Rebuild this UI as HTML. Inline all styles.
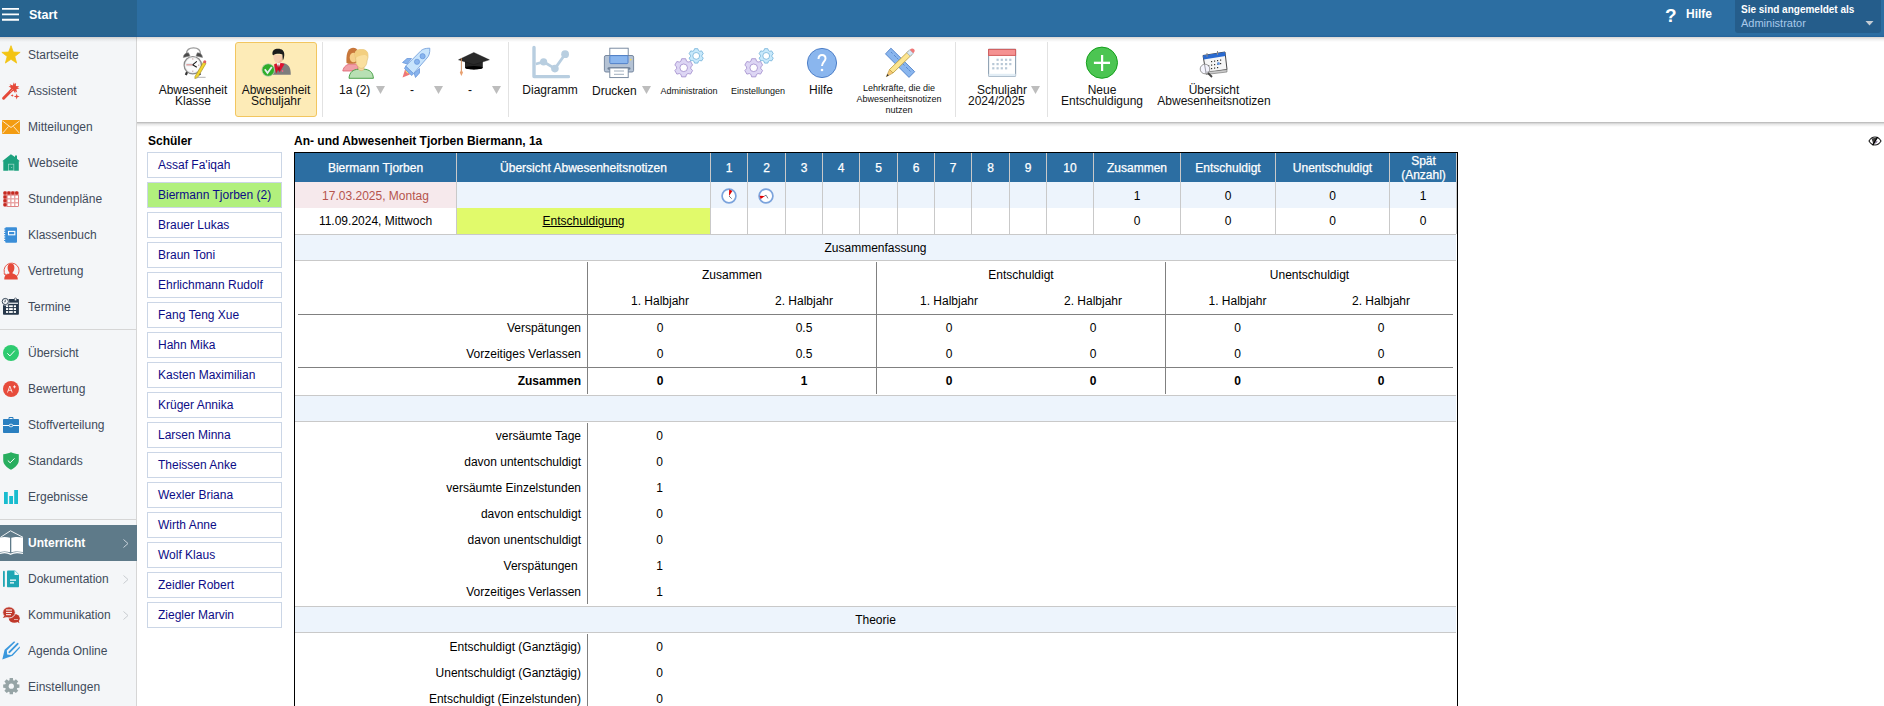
<!DOCTYPE html><html><head><meta charset="utf-8"><style>
html,body{margin:0;padding:0;width:1884px;height:706px;overflow:hidden;background:#fff;font-family:"Liberation Sans",sans-serif;font-size:12px;color:#000;}
div{box-sizing:border-box;}
svg{position:absolute;display:block;}
</style></head><body>
<div style="position:absolute;left:0px;top:0px;width:1884px;height:37px;background:#2c6ea2;"></div>
<div style="position:absolute;left:0px;top:0px;width:137px;height:37px;background:#28648f;"></div>
<div style="position:absolute;left:0px;top:35px;width:1884px;height:2px;background:linear-gradient(rgba(30,90,150,0),rgba(30,90,150,0.6));"></div>
<svg style="left:2px;top:7px" width="18" height="14"><path d="M0 1.95H17M0 7.35H17M0 12.75H17" stroke="#fff" stroke-width="1.8"/></svg>
<div style="position:absolute;left:29px;top:1px;width:60px;height:29px;line-height:29px;text-align:left;white-space:nowrap;color:#fff;font-weight:bold;font-size:12.5px;">Start</div>
<div style="position:absolute;left:1665px;top:1px;width:14px;height:29px;line-height:29px;text-align:left;white-space:nowrap;color:#fff;font-weight:bold;font-size:19px;">?</div>
<div style="position:absolute;left:1686px;top:0px;width:40px;height:29px;line-height:29px;text-align:left;white-space:nowrap;color:#fff;font-weight:bold;font-size:12px;">Hilfe</div>
<div style="position:absolute;left:1735px;top:0px;width:146px;height:33px;background:#255d8b;border-radius:0 0 3px 3px;"></div>
<div style="position:absolute;left:1741px;top:2.5px;width:140px;height:14px;line-height:14px;text-align:left;white-space:nowrap;color:#fff;font-weight:bold;font-size:10px;">Sie sind angemeldet als</div>
<div style="position:absolute;left:1741px;top:16px;width:140px;height:14px;line-height:14px;text-align:left;white-space:nowrap;color:#a9c9ea;font-size:11px;">Administrator</div>
<svg style="left:1865px;top:21px" width="9" height="5"><path d="M0.5 0H8.5L4.5 4.5Z" fill="#c4ccd4"/></svg>
<div style="position:absolute;left:0px;top:37px;width:136px;height:669px;background:#f4f6f8;"></div>
<div style="position:absolute;left:136px;top:37px;width:1px;height:669px;background:#d6d6d6;"></div>
<div style="position:absolute;left:0px;top:329px;width:136px;height:1px;background:#d6d6d6;"></div>
<div style="position:absolute;left:0px;top:519px;width:136px;height:1px;background:#d6d6d6;"></div>
<div style="position:absolute;left:0px;top:525px;width:137px;height:36px;background:#5e7a89;"></div>
<div style="position:absolute;left:28px;top:525px;width:100px;height:36px;line-height:36px;text-align:left;white-space:nowrap;color:#fff;font-weight:bold;">Unterricht</div>
<div style="position:absolute;left:28px;top:37px;width:106px;height:36px;line-height:36px;text-align:left;white-space:nowrap;color:#3f4b5b;">Startseite</div>
<div style="position:absolute;left:28px;top:73px;width:106px;height:36px;line-height:36px;text-align:left;white-space:nowrap;color:#3f4b5b;">Assistent</div>
<div style="position:absolute;left:28px;top:109px;width:106px;height:36px;line-height:36px;text-align:left;white-space:nowrap;color:#3f4b5b;">Mitteilungen</div>
<div style="position:absolute;left:28px;top:145px;width:106px;height:36px;line-height:36px;text-align:left;white-space:nowrap;color:#3f4b5b;">Webseite</div>
<div style="position:absolute;left:28px;top:181px;width:106px;height:36px;line-height:36px;text-align:left;white-space:nowrap;color:#3f4b5b;">Stundenpläne</div>
<div style="position:absolute;left:28px;top:217px;width:106px;height:36px;line-height:36px;text-align:left;white-space:nowrap;color:#3f4b5b;">Klassenbuch</div>
<div style="position:absolute;left:28px;top:253px;width:106px;height:36px;line-height:36px;text-align:left;white-space:nowrap;color:#3f4b5b;">Vertretung</div>
<div style="position:absolute;left:28px;top:289px;width:106px;height:36px;line-height:36px;text-align:left;white-space:nowrap;color:#3f4b5b;">Termine</div>
<div style="position:absolute;left:28px;top:335px;width:106px;height:36px;line-height:36px;text-align:left;white-space:nowrap;color:#3f4b5b;">Übersicht</div>
<div style="position:absolute;left:28px;top:371px;width:106px;height:36px;line-height:36px;text-align:left;white-space:nowrap;color:#3f4b5b;">Bewertung</div>
<div style="position:absolute;left:28px;top:407px;width:106px;height:36px;line-height:36px;text-align:left;white-space:nowrap;color:#3f4b5b;">Stoffverteilung</div>
<div style="position:absolute;left:28px;top:443px;width:106px;height:36px;line-height:36px;text-align:left;white-space:nowrap;color:#3f4b5b;">Standards</div>
<div style="position:absolute;left:28px;top:479px;width:106px;height:36px;line-height:36px;text-align:left;white-space:nowrap;color:#3f4b5b;">Ergebnisse</div>
<div style="position:absolute;left:28px;top:561px;width:106px;height:36px;line-height:36px;text-align:left;white-space:nowrap;color:#3f4b5b;">Dokumentation</div>
<div style="position:absolute;left:28px;top:597px;width:106px;height:36px;line-height:36px;text-align:left;white-space:nowrap;color:#3f4b5b;">Kommunikation</div>
<div style="position:absolute;left:28px;top:633px;width:106px;height:36px;line-height:36px;text-align:left;white-space:nowrap;color:#3f4b5b;">Agenda Online</div>
<div style="position:absolute;left:28px;top:669px;width:106px;height:36px;line-height:36px;text-align:left;white-space:nowrap;color:#3f4b5b;">Einstellungen</div>
<svg style="left:123px;top:539px" width="6" height="9"><path d="M0.5 0.5L5 4.5L0.5 8.5" fill="none" stroke="#c9d3da" stroke-width="1"/></svg>
<svg style="left:123px;top:575px" width="6" height="9"><path d="M0.5 0.5L5 4.5L0.5 8.5" fill="none" stroke="#c8ccd0" stroke-width="1"/></svg>
<svg style="left:123px;top:611px" width="6" height="9"><path d="M0.5 0.5L5 4.5L0.5 8.5" fill="none" stroke="#c8ccd0" stroke-width="1"/></svg>
<div style="position:absolute;left:137px;top:37px;width:1747px;height:85px;background:#fff;"></div>
<div style="position:absolute;left:137px;top:122px;width:1747px;height:5px;background:linear-gradient(rgba(0,0,0,0.30),rgba(0,0,0,0.10) 40%,rgba(0,0,0,0));"></div>
<div style="position:absolute;left:0px;top:37px;width:1884px;height:5px;background:linear-gradient(rgba(70,50,30,0.20),rgba(0,0,0,0.06) 50%,rgba(0,0,0,0));"></div>
<div style="position:absolute;left:235px;top:42px;width:82px;height:75px;background:#fdebb7;border:1px solid #f2c660;border-radius:3px;"></div>
<div style="position:absolute;left:322px;top:42px;width:1px;height:75px;background:#e2e2e2;"></div>
<div style="position:absolute;left:508px;top:42px;width:1px;height:75px;background:#e2e2e2;"></div>
<div style="position:absolute;left:955px;top:42px;width:1px;height:75px;background:#e2e2e2;"></div>
<div style="position:absolute;left:1047px;top:42px;width:1px;height:75px;background:#e2e2e2;"></div>
<div style="position:absolute;left:113px;top:85px;width:160px;height:11px;line-height:11px;text-align:center;white-space:nowrap;font-size:12px;color:#111;">Abwesenheit</div>
<div style="position:absolute;left:113px;top:96px;width:160px;height:11px;line-height:11px;text-align:center;white-space:nowrap;font-size:12px;color:#111;">Klasse</div>
<div style="position:absolute;left:196px;top:85px;width:160px;height:11px;line-height:11px;text-align:center;white-space:nowrap;font-size:12px;color:#111;">Abwesenheit</div>
<div style="position:absolute;left:196px;top:96px;width:160px;height:11px;line-height:11px;text-align:center;white-space:nowrap;font-size:12px;color:#111;">Schuljahr</div>
<div style="position:absolute;left:339px;top:84px;width:40px;height:12px;line-height:12px;text-align:left;white-space:nowrap;color:#111;">1a (2)</div>
<div style="position:absolute;left:410px;top:84px;width:10px;height:12px;line-height:12px;text-align:left;white-space:nowrap;color:#111;">-</div>
<div style="position:absolute;left:468px;top:84px;width:10px;height:12px;line-height:12px;text-align:left;white-space:nowrap;color:#111;">-</div>
<div style="position:absolute;left:470px;top:85px;width:160px;height:11px;line-height:11px;text-align:center;white-space:nowrap;font-size:12px;color:#111;">Diagramm</div>
<div style="position:absolute;left:592px;top:85px;width:50px;height:12px;line-height:12px;text-align:left;white-space:nowrap;color:#111;">Drucken</div>
<div style="position:absolute;left:609px;top:86px;width:160px;height:11px;line-height:11px;text-align:center;white-space:nowrap;font-size:9px;color:#111;">Administration</div>
<div style="position:absolute;left:678px;top:86px;width:160px;height:11px;line-height:11px;text-align:center;white-space:nowrap;font-size:9px;color:#111;">Einstellungen</div>
<div style="position:absolute;left:741px;top:85px;width:160px;height:11px;line-height:11px;text-align:center;white-space:nowrap;font-size:12px;color:#111;">Hilfe</div>
<div style="position:absolute;left:819px;top:83px;width:160px;height:11px;line-height:11px;text-align:center;white-space:nowrap;font-size:9px;color:#111;">Lehrkräfte, die die</div>
<div style="position:absolute;left:819px;top:94px;width:160px;height:11px;line-height:11px;text-align:center;white-space:nowrap;font-size:9px;color:#111;">Abwesenheitsnotizen</div>
<div style="position:absolute;left:819px;top:105px;width:160px;height:11px;line-height:11px;text-align:center;white-space:nowrap;font-size:9px;color:#111;">nutzen</div>
<div style="position:absolute;left:977px;top:84px;width:60px;height:12px;line-height:12px;text-align:left;white-space:nowrap;color:#111;">Schuljahr</div>
<div style="position:absolute;left:968px;top:95px;width:60px;height:12px;line-height:12px;text-align:left;white-space:nowrap;color:#111;">2024/2025</div>
<div style="position:absolute;left:1022px;top:85px;width:160px;height:11px;line-height:11px;text-align:center;white-space:nowrap;font-size:12px;color:#111;">Neue</div>
<div style="position:absolute;left:1022px;top:96px;width:160px;height:11px;line-height:11px;text-align:center;white-space:nowrap;font-size:12px;color:#111;">Entschuldigung</div>
<div style="position:absolute;left:1134px;top:85px;width:160px;height:11px;line-height:11px;text-align:center;white-space:nowrap;font-size:12px;color:#111;">Übersicht</div>
<div style="position:absolute;left:1134px;top:96px;width:160px;height:11px;line-height:11px;text-align:center;white-space:nowrap;font-size:12px;color:#111;">Abwesenheitsnotizen</div>
<svg style="left:376px;top:86px" width="9" height="8"><path d="M0 0H9L4.5 8Z" fill="#bdbdbd"/></svg>
<svg style="left:434px;top:86px" width="9" height="8"><path d="M0 0H9L4.5 8Z" fill="#bdbdbd"/></svg>
<svg style="left:492px;top:86px" width="9" height="8"><path d="M0 0H9L4.5 8Z" fill="#bdbdbd"/></svg>
<svg style="left:642px;top:86px" width="9" height="8"><path d="M0 0H9L4.5 8Z" fill="#bdbdbd"/></svg>
<svg style="left:1031px;top:86px" width="9" height="8"><path d="M0 0H9L4.5 8Z" fill="#bdbdbd"/></svg>
<div style="position:absolute;left:148px;top:134px;width:80px;height:14px;line-height:14px;text-align:left;white-space:nowrap;font-weight:bold;color:#000;">Schüler</div>
<div style="position:absolute;left:147px;top:152px;width:135px;height:26px;background:#fff;border:1px solid #cbd6e6;"></div>
<div style="position:absolute;left:158px;top:152px;width:124px;height:26px;line-height:26px;text-align:left;white-space:nowrap;color:#0c0c86;">Assaf Fa&#39;iqah</div>
<div style="position:absolute;left:147px;top:182px;width:135px;height:26px;background:#b1f07d;border:1px solid #cbd6e6;"></div>
<div style="position:absolute;left:158px;top:182px;width:124px;height:26px;line-height:26px;text-align:left;white-space:nowrap;color:#0c0c86;">Biermann Tjorben (2)</div>
<div style="position:absolute;left:147px;top:212px;width:135px;height:26px;background:#fff;border:1px solid #cbd6e6;"></div>
<div style="position:absolute;left:158px;top:212px;width:124px;height:26px;line-height:26px;text-align:left;white-space:nowrap;color:#0c0c86;">Brauer Lukas</div>
<div style="position:absolute;left:147px;top:242px;width:135px;height:26px;background:#fff;border:1px solid #cbd6e6;"></div>
<div style="position:absolute;left:158px;top:242px;width:124px;height:26px;line-height:26px;text-align:left;white-space:nowrap;color:#0c0c86;">Braun Toni</div>
<div style="position:absolute;left:147px;top:272px;width:135px;height:26px;background:#fff;border:1px solid #cbd6e6;"></div>
<div style="position:absolute;left:158px;top:272px;width:124px;height:26px;line-height:26px;text-align:left;white-space:nowrap;color:#0c0c86;">Ehrlichmann Rudolf</div>
<div style="position:absolute;left:147px;top:302px;width:135px;height:26px;background:#fff;border:1px solid #cbd6e6;"></div>
<div style="position:absolute;left:158px;top:302px;width:124px;height:26px;line-height:26px;text-align:left;white-space:nowrap;color:#0c0c86;">Fang Teng Xue</div>
<div style="position:absolute;left:147px;top:332px;width:135px;height:26px;background:#fff;border:1px solid #cbd6e6;"></div>
<div style="position:absolute;left:158px;top:332px;width:124px;height:26px;line-height:26px;text-align:left;white-space:nowrap;color:#0c0c86;">Hahn Mika</div>
<div style="position:absolute;left:147px;top:362px;width:135px;height:26px;background:#fff;border:1px solid #cbd6e6;"></div>
<div style="position:absolute;left:158px;top:362px;width:124px;height:26px;line-height:26px;text-align:left;white-space:nowrap;color:#0c0c86;">Kasten Maximilian</div>
<div style="position:absolute;left:147px;top:392px;width:135px;height:26px;background:#fff;border:1px solid #cbd6e6;"></div>
<div style="position:absolute;left:158px;top:392px;width:124px;height:26px;line-height:26px;text-align:left;white-space:nowrap;color:#0c0c86;">Krüger Annika</div>
<div style="position:absolute;left:147px;top:422px;width:135px;height:26px;background:#fff;border:1px solid #cbd6e6;"></div>
<div style="position:absolute;left:158px;top:422px;width:124px;height:26px;line-height:26px;text-align:left;white-space:nowrap;color:#0c0c86;">Larsen Minna</div>
<div style="position:absolute;left:147px;top:452px;width:135px;height:26px;background:#fff;border:1px solid #cbd6e6;"></div>
<div style="position:absolute;left:158px;top:452px;width:124px;height:26px;line-height:26px;text-align:left;white-space:nowrap;color:#0c0c86;">Theissen Anke</div>
<div style="position:absolute;left:147px;top:482px;width:135px;height:26px;background:#fff;border:1px solid #cbd6e6;"></div>
<div style="position:absolute;left:158px;top:482px;width:124px;height:26px;line-height:26px;text-align:left;white-space:nowrap;color:#0c0c86;">Wexler Briana</div>
<div style="position:absolute;left:147px;top:512px;width:135px;height:26px;background:#fff;border:1px solid #cbd6e6;"></div>
<div style="position:absolute;left:158px;top:512px;width:124px;height:26px;line-height:26px;text-align:left;white-space:nowrap;color:#0c0c86;">Wirth Anne</div>
<div style="position:absolute;left:147px;top:542px;width:135px;height:26px;background:#fff;border:1px solid #cbd6e6;"></div>
<div style="position:absolute;left:158px;top:542px;width:124px;height:26px;line-height:26px;text-align:left;white-space:nowrap;color:#0c0c86;">Wolf Klaus</div>
<div style="position:absolute;left:147px;top:572px;width:135px;height:26px;background:#fff;border:1px solid #cbd6e6;"></div>
<div style="position:absolute;left:158px;top:572px;width:124px;height:26px;line-height:26px;text-align:left;white-space:nowrap;color:#0c0c86;">Zeidler Robert</div>
<div style="position:absolute;left:147px;top:602px;width:135px;height:26px;background:#fff;border:1px solid #cbd6e6;"></div>
<div style="position:absolute;left:158px;top:602px;width:124px;height:26px;line-height:26px;text-align:left;white-space:nowrap;color:#0c0c86;">Ziegler Marvin</div>
<div style="position:absolute;left:294px;top:134px;width:300px;height:14px;line-height:14px;text-align:left;white-space:nowrap;font-weight:bold;color:#000;">An- und Abwesenheit Tjorben Biermann, 1a</div>
<svg style="left:1868px;top:136px" width="14" height="10" viewBox="0 0 14 10"><path d="M1 5C2.5 2.3 4.8 1 7 1C9.2 1 11.5 2.3 13 5C11.5 7.7 9.2 9 7 9C4.8 9 2.5 7.7 1 5Z" fill="none" stroke="#1a1a1a" stroke-width="1.1"/><path d="M3.5 2.5L9.2 1.4L5.5 8.5Z" fill="#1a1a1a" opacity="0.85"/><path d="M9.6 1L4.6 9.4" stroke="#000" stroke-width="1.4"/><path d="M8.8 5A1.5 1.5 0 0 1 7 6.8" stroke="#402060" stroke-width="0.8" fill="none"/></svg>
<div style="position:absolute;left:294px;top:152px;width:1164px;height:559px;border:1px solid #000;border-bottom:none;"></div>
<div style="position:absolute;left:295px;top:153px;width:1162px;height:29px;background:#2c6ea2;"></div>
<div style="position:absolute;left:295px;top:182px;width:1162px;height:26px;background:#edf4fc;"></div>
<div style="position:absolute;left:295px;top:182px;width:161px;height:26px;background:#f6e9ec;"></div>
<div style="position:absolute;left:457px;top:208px;width:253px;height:26px;background:#e1fa6b;"></div>
<div style="position:absolute;left:456px;top:153px;width:1px;height:81px;background:#c9c9c9;"></div>
<div style="position:absolute;left:710px;top:153px;width:1px;height:81px;background:#c9c9c9;"></div>
<div style="position:absolute;left:747px;top:153px;width:1px;height:81px;background:#c9c9c9;"></div>
<div style="position:absolute;left:785px;top:153px;width:1px;height:81px;background:#c9c9c9;"></div>
<div style="position:absolute;left:822px;top:153px;width:1px;height:81px;background:#c9c9c9;"></div>
<div style="position:absolute;left:859px;top:153px;width:1px;height:81px;background:#c9c9c9;"></div>
<div style="position:absolute;left:897px;top:153px;width:1px;height:81px;background:#c9c9c9;"></div>
<div style="position:absolute;left:934px;top:153px;width:1px;height:81px;background:#c9c9c9;"></div>
<div style="position:absolute;left:971px;top:153px;width:1px;height:81px;background:#c9c9c9;"></div>
<div style="position:absolute;left:1009px;top:153px;width:1px;height:81px;background:#c9c9c9;"></div>
<div style="position:absolute;left:1046px;top:153px;width:1px;height:81px;background:#c9c9c9;"></div>
<div style="position:absolute;left:1093px;top:153px;width:1px;height:81px;background:#c9c9c9;"></div>
<div style="position:absolute;left:1180px;top:153px;width:1px;height:81px;background:#c9c9c9;"></div>
<div style="position:absolute;left:1275px;top:153px;width:1px;height:81px;background:#c9c9c9;"></div>
<div style="position:absolute;left:1389px;top:153px;width:1px;height:81px;background:#c9c9c9;"></div>
<div style="position:absolute;left:1456px;top:153px;width:1px;height:81px;background:#c9c9c9;"></div>
<div style="position:absolute;left:295px;top:234px;width:1161px;height:1px;background:#c9c9c9;"></div>
<div style="position:absolute;left:295px;top:154px;width:161px;height:29px;line-height:29px;text-align:center;white-space:nowrap;color:#fff;-webkit-text-stroke:0.25px #fff;">Biermann Tjorben</div>
<div style="position:absolute;left:457px;top:154px;width:253px;height:29px;line-height:29px;text-align:center;white-space:nowrap;color:#fff;-webkit-text-stroke:0.25px #fff;">Übersicht Abwesenheitsnotizen</div>
<div style="position:absolute;left:711px;top:154px;width:36px;height:29px;line-height:29px;text-align:center;white-space:nowrap;color:#fff;-webkit-text-stroke:0.25px #fff;">1</div>
<div style="position:absolute;left:748px;top:154px;width:37px;height:29px;line-height:29px;text-align:center;white-space:nowrap;color:#fff;-webkit-text-stroke:0.25px #fff;">2</div>
<div style="position:absolute;left:786px;top:154px;width:36px;height:29px;line-height:29px;text-align:center;white-space:nowrap;color:#fff;-webkit-text-stroke:0.25px #fff;">3</div>
<div style="position:absolute;left:823px;top:154px;width:36px;height:29px;line-height:29px;text-align:center;white-space:nowrap;color:#fff;-webkit-text-stroke:0.25px #fff;">4</div>
<div style="position:absolute;left:860px;top:154px;width:37px;height:29px;line-height:29px;text-align:center;white-space:nowrap;color:#fff;-webkit-text-stroke:0.25px #fff;">5</div>
<div style="position:absolute;left:898px;top:154px;width:36px;height:29px;line-height:29px;text-align:center;white-space:nowrap;color:#fff;-webkit-text-stroke:0.25px #fff;">6</div>
<div style="position:absolute;left:935px;top:154px;width:36px;height:29px;line-height:29px;text-align:center;white-space:nowrap;color:#fff;-webkit-text-stroke:0.25px #fff;">7</div>
<div style="position:absolute;left:972px;top:154px;width:37px;height:29px;line-height:29px;text-align:center;white-space:nowrap;color:#fff;-webkit-text-stroke:0.25px #fff;">8</div>
<div style="position:absolute;left:1010px;top:154px;width:36px;height:29px;line-height:29px;text-align:center;white-space:nowrap;color:#fff;-webkit-text-stroke:0.25px #fff;">9</div>
<div style="position:absolute;left:1047px;top:154px;width:46px;height:29px;line-height:29px;text-align:center;white-space:nowrap;color:#fff;-webkit-text-stroke:0.25px #fff;">10</div>
<div style="position:absolute;left:1094px;top:154px;width:86px;height:29px;line-height:29px;text-align:center;white-space:nowrap;color:#fff;-webkit-text-stroke:0.25px #fff;">Zusammen</div>
<div style="position:absolute;left:1181px;top:154px;width:94px;height:29px;line-height:29px;text-align:center;white-space:nowrap;color:#fff;-webkit-text-stroke:0.25px #fff;">Entschuldigt</div>
<div style="position:absolute;left:1276px;top:154px;width:113px;height:29px;line-height:29px;text-align:center;white-space:nowrap;color:#fff;-webkit-text-stroke:0.25px #fff;">Unentschuldigt</div>
<div style="position:absolute;left:1390px;top:153px;width:67px;height:29px;text-align:center;color:#fff;-webkit-text-stroke:0.25px #fff;line-height:14px;padding-top:1px;">Spät<br>(Anzahl)</div>
<div style="position:absolute;left:295px;top:183px;width:161px;height:26px;line-height:26px;text-align:center;white-space:nowrap;color:#b5544c;">17.03.2025, Montag</div>
<div style="position:absolute;left:295px;top:208px;width:161px;height:26px;line-height:26px;text-align:center;white-space:nowrap;color:#000;">11.09.2024, Mittwoch</div>
<div style="position:absolute;left:457px;top:208px;width:253px;height:26px;line-height:26px;text-align:center;white-space:nowrap;color:#000;"><span style="text-decoration:underline">Entschuldigung</span></div>
<div style="position:absolute;left:1094px;top:183px;width:86px;height:26px;line-height:26px;text-align:center;white-space:nowrap;">1</div>
<div style="position:absolute;left:1181px;top:183px;width:94px;height:26px;line-height:26px;text-align:center;white-space:nowrap;">0</div>
<div style="position:absolute;left:1276px;top:183px;width:113px;height:26px;line-height:26px;text-align:center;white-space:nowrap;">0</div>
<div style="position:absolute;left:1390px;top:183px;width:66px;height:26px;line-height:26px;text-align:center;white-space:nowrap;">1</div>
<div style="position:absolute;left:1094px;top:208px;width:86px;height:26px;line-height:26px;text-align:center;white-space:nowrap;">0</div>
<div style="position:absolute;left:1181px;top:208px;width:94px;height:26px;line-height:26px;text-align:center;white-space:nowrap;">0</div>
<div style="position:absolute;left:1276px;top:208px;width:113px;height:26px;line-height:26px;text-align:center;white-space:nowrap;">0</div>
<div style="position:absolute;left:1390px;top:208px;width:66px;height:26px;line-height:26px;text-align:center;white-space:nowrap;">0</div>
<svg style="left:721px;top:188px" width="16" height="16" viewBox="0 0 16 16"><circle cx="8" cy="8" r="6.9" fill="#fff" stroke="#7ba3dc" stroke-width="1.7"/><path d="M8 8L8.2 1.6L11.4 3Z" fill="#e00000"/><path d="M8 8L10.7 10.7" stroke="#4a5a6a" stroke-width="0.8" fill="none"/></svg>
<svg style="left:758px;top:188px" width="16" height="16" viewBox="0 0 16 16"><circle cx="8" cy="8" r="6.9" fill="#fff" stroke="#7ba3dc" stroke-width="1.7"/><path d="M7 8L1.6 7.8L2.6 10.9Z" fill="#e00000"/><path d="M6.5 7.7L8.2 7.3L9.9 10.4" stroke="#4a5a6a" stroke-width="0.8" fill="none"/></svg>
<div style="position:absolute;left:295px;top:235px;width:1161px;height:25px;background:#edf4fc;"></div>
<div style="position:absolute;left:295px;top:260px;width:1161px;height:1px;background:#c9c9c9;"></div>
<div style="position:absolute;left:295px;top:236px;width:1161px;height:25px;line-height:25px;text-align:center;white-space:nowrap;color:#000;">Zusammenfassung</div>
<div style="position:absolute;left:587px;top:262px;width:1px;height:132px;background:#808080;"></div>
<div style="position:absolute;left:876px;top:262px;width:1px;height:132px;background:#808080;"></div>
<div style="position:absolute;left:1165px;top:262px;width:1px;height:132px;background:#808080;"></div>
<div style="position:absolute;left:298px;top:314px;width:1155px;height:1px;background:#808080;"></div>
<div style="position:absolute;left:298px;top:367px;width:1155px;height:1px;background:#808080;"></div>
<div style="position:absolute;left:588px;top:263px;width:288px;height:25px;line-height:25px;text-align:center;white-space:nowrap;">Zusammen</div>
<div style="position:absolute;left:588px;top:288px;width:144px;height:26px;line-height:26px;text-align:center;white-space:nowrap;">1. Halbjahr</div>
<div style="position:absolute;left:732px;top:288px;width:144px;height:26px;line-height:26px;text-align:center;white-space:nowrap;">2. Halbjahr</div>
<div style="position:absolute;left:877px;top:263px;width:288px;height:25px;line-height:25px;text-align:center;white-space:nowrap;">Entschuldigt</div>
<div style="position:absolute;left:877px;top:288px;width:144px;height:26px;line-height:26px;text-align:center;white-space:nowrap;">1. Halbjahr</div>
<div style="position:absolute;left:1021px;top:288px;width:144px;height:26px;line-height:26px;text-align:center;white-space:nowrap;">2. Halbjahr</div>
<div style="position:absolute;left:1166px;top:263px;width:287px;height:25px;line-height:25px;text-align:center;white-space:nowrap;">Unentschuldigt</div>
<div style="position:absolute;left:1166px;top:288px;width:143px;height:26px;line-height:26px;text-align:center;white-space:nowrap;">1. Halbjahr</div>
<div style="position:absolute;left:1309px;top:288px;width:144px;height:26px;line-height:26px;text-align:center;white-space:nowrap;">2. Halbjahr</div>
<div style="position:absolute;left:298px;top:315px;width:283px;height:26px;line-height:26px;text-align:right;white-space:nowrap;">Verspätungen</div>
<div style="position:absolute;left:588px;top:315px;width:144px;height:26px;line-height:26px;text-align:center;white-space:nowrap;">0</div>
<div style="position:absolute;left:732px;top:315px;width:144px;height:26px;line-height:26px;text-align:center;white-space:nowrap;">0.5</div>
<div style="position:absolute;left:877px;top:315px;width:144px;height:26px;line-height:26px;text-align:center;white-space:nowrap;">0</div>
<div style="position:absolute;left:1021px;top:315px;width:144px;height:26px;line-height:26px;text-align:center;white-space:nowrap;">0</div>
<div style="position:absolute;left:1166px;top:315px;width:143px;height:26px;line-height:26px;text-align:center;white-space:nowrap;">0</div>
<div style="position:absolute;left:1309px;top:315px;width:144px;height:26px;line-height:26px;text-align:center;white-space:nowrap;">0</div>
<div style="position:absolute;left:298px;top:341px;width:283px;height:26px;line-height:26px;text-align:right;white-space:nowrap;">Vorzeitiges Verlassen</div>
<div style="position:absolute;left:588px;top:341px;width:144px;height:26px;line-height:26px;text-align:center;white-space:nowrap;">0</div>
<div style="position:absolute;left:732px;top:341px;width:144px;height:26px;line-height:26px;text-align:center;white-space:nowrap;">0.5</div>
<div style="position:absolute;left:877px;top:341px;width:144px;height:26px;line-height:26px;text-align:center;white-space:nowrap;">0</div>
<div style="position:absolute;left:1021px;top:341px;width:144px;height:26px;line-height:26px;text-align:center;white-space:nowrap;">0</div>
<div style="position:absolute;left:1166px;top:341px;width:143px;height:26px;line-height:26px;text-align:center;white-space:nowrap;">0</div>
<div style="position:absolute;left:1309px;top:341px;width:144px;height:26px;line-height:26px;text-align:center;white-space:nowrap;">0</div>
<div style="position:absolute;left:298px;top:368px;width:283px;height:26px;line-height:26px;text-align:right;white-space:nowrap;font-weight:bold;">Zusammen</div>
<div style="position:absolute;left:588px;top:368px;width:144px;height:26px;line-height:26px;text-align:center;white-space:nowrap;font-weight:bold;">0</div>
<div style="position:absolute;left:732px;top:368px;width:144px;height:26px;line-height:26px;text-align:center;white-space:nowrap;font-weight:bold;">1</div>
<div style="position:absolute;left:877px;top:368px;width:144px;height:26px;line-height:26px;text-align:center;white-space:nowrap;font-weight:bold;">0</div>
<div style="position:absolute;left:1021px;top:368px;width:144px;height:26px;line-height:26px;text-align:center;white-space:nowrap;font-weight:bold;">0</div>
<div style="position:absolute;left:1166px;top:368px;width:143px;height:26px;line-height:26px;text-align:center;white-space:nowrap;font-weight:bold;">0</div>
<div style="position:absolute;left:1309px;top:368px;width:144px;height:26px;line-height:26px;text-align:center;white-space:nowrap;font-weight:bold;">0</div>
<div style="position:absolute;left:295px;top:395px;width:1161px;height:1px;background:#c9c9c9;"></div>
<div style="position:absolute;left:295px;top:396px;width:1161px;height:25px;background:#edf4fc;"></div>
<div style="position:absolute;left:295px;top:421px;width:1161px;height:1px;background:#c9c9c9;"></div>
<div style="position:absolute;left:587px;top:423px;width:1px;height:181px;background:#808080;"></div>
<div style="position:absolute;left:298px;top:423px;width:283px;height:26px;line-height:26px;text-align:right;white-space:nowrap;">versäumte Tage</div>
<div style="position:absolute;left:588px;top:423px;width:143px;height:26px;line-height:26px;text-align:center;white-space:nowrap;">0</div>
<div style="position:absolute;left:298px;top:449px;width:283px;height:26px;line-height:26px;text-align:right;white-space:nowrap;">davon untentschuldigt</div>
<div style="position:absolute;left:588px;top:449px;width:143px;height:26px;line-height:26px;text-align:center;white-space:nowrap;">0</div>
<div style="position:absolute;left:298px;top:475px;width:283px;height:26px;line-height:26px;text-align:right;white-space:nowrap;">versäumte Einzelstunden</div>
<div style="position:absolute;left:588px;top:475px;width:143px;height:26px;line-height:26px;text-align:center;white-space:nowrap;">1</div>
<div style="position:absolute;left:298px;top:501px;width:283px;height:26px;line-height:26px;text-align:right;white-space:nowrap;">davon entschuldigt</div>
<div style="position:absolute;left:588px;top:501px;width:143px;height:26px;line-height:26px;text-align:center;white-space:nowrap;">0</div>
<div style="position:absolute;left:298px;top:527px;width:283px;height:26px;line-height:26px;text-align:right;white-space:nowrap;">davon unentschuldigt</div>
<div style="position:absolute;left:588px;top:527px;width:143px;height:26px;line-height:26px;text-align:center;white-space:nowrap;">0</div>
<div style="position:absolute;left:298px;top:553px;width:283px;height:26px;line-height:26px;text-align:right;white-space:nowrap;">Verspätungen&nbsp;</div>
<div style="position:absolute;left:588px;top:553px;width:143px;height:26px;line-height:26px;text-align:center;white-space:nowrap;">1</div>
<div style="position:absolute;left:298px;top:579px;width:283px;height:26px;line-height:26px;text-align:right;white-space:nowrap;">Vorzeitiges Verlassen</div>
<div style="position:absolute;left:588px;top:579px;width:143px;height:26px;line-height:26px;text-align:center;white-space:nowrap;">1</div>
<div style="position:absolute;left:295px;top:606px;width:1161px;height:1px;background:#c9c9c9;"></div>
<div style="position:absolute;left:295px;top:607px;width:1161px;height:25px;background:#edf4fc;"></div>
<div style="position:absolute;left:295px;top:632px;width:1161px;height:1px;background:#c9c9c9;"></div>
<div style="position:absolute;left:295px;top:608px;width:1161px;height:25px;line-height:25px;text-align:center;white-space:nowrap;">Theorie</div>
<div style="position:absolute;left:587px;top:634px;width:1px;height:80px;background:#808080;"></div>
<div style="position:absolute;left:298px;top:634px;width:283px;height:26px;line-height:26px;text-align:right;white-space:nowrap;">Entschuldigt (Ganztägig)</div>
<div style="position:absolute;left:588px;top:634px;width:143px;height:26px;line-height:26px;text-align:center;white-space:nowrap;">0</div>
<div style="position:absolute;left:298px;top:660px;width:283px;height:26px;line-height:26px;text-align:right;white-space:nowrap;">Unentschuldigt (Ganztägig)</div>
<div style="position:absolute;left:588px;top:660px;width:143px;height:26px;line-height:26px;text-align:center;white-space:nowrap;">0</div>
<div style="position:absolute;left:298px;top:686px;width:283px;height:26px;line-height:26px;text-align:right;white-space:nowrap;">Entschuldigt (Einzelstunden)</div>
<div style="position:absolute;left:588px;top:686px;width:143px;height:26px;line-height:26px;text-align:center;white-space:nowrap;">0</div>
<svg style="left:1px;top:45px" width="20" height="19" viewBox="0 0 20 19"><path d="M10.00,0.70 L12.35,7.06 L19.13,7.33 L13.80,11.54 L15.64,18.07 L10.00,14.30 L4.36,18.07 L6.20,11.54 L0.87,7.33 L7.65,7.06Z" fill="#f3c413" stroke="#f3c413" stroke-width="0.8" stroke-linejoin="round"/></svg>
<svg style="left:0px;top:78px" width="24" height="24" viewBox="0 0 24 24"><path d="M3.6 20.2L12.5 11.3" stroke="#e5493a" stroke-width="3" stroke-linecap="round"/><path d="M13.90,4.30 L15.25,8.04 L19.23,8.17 L16.09,10.61 L17.19,14.43 L13.90,12.20 L10.61,14.43 L11.71,10.61 L8.57,8.17 L12.55,8.04Z" fill="#e5493a"/><path d="M13.90,4.30 L15.25,8.04 L19.23,8.17 L16.09,10.61 L17.19,14.43 L13.90,12.20 L10.61,14.43 L11.71,10.61 L8.57,8.17 L12.55,8.04Z" fill="#e5493a" transform="rotate(22.5 13.9 9.9)"/><path d="M16.7 15.5L17.4 17.8L19.7 18.5L17.4 19.2L16.7 21.5L16 19.2L13.7 18.5L16 17.8Z" fill="#e5493a"/><path d="M12.2 15.9L12.6 17.1L13.8 17.5L12.6 17.9L12.2 19.1L11.8 17.9L10.6 17.5L11.8 17.1Z" fill="#e5493a"/><path d="M10 14L13 11" stroke="#fff" stroke-width="0.5" opacity="0.7"/></svg>
<svg style="left:2px;top:120px" width="18" height="14" viewBox="0 0 18 14"><rect x="0" y="0" width="18" height="14" fill="#f39c12"/><path d="M0.3 0.8L9 7.5L17.7 0.8M0.5 13.3L6.5 6.5M17.5 13.3L11.5 6.5" stroke="#fff" stroke-width="0.9" fill="none" opacity="0.85"/></svg>
<svg style="left:0px;top:150px" width="24" height="24" viewBox="0 0 24 24"><path d="M10.9 4.2L2.2 11.2H3.3V20.8H18.8V11.2H19.9L17 8.8V5.6H15V7.1Z" fill="#1ca17e"/><rect x="8.5" y="14.2" width="5.3" height="6.6" fill="none" stroke="#fff" stroke-width="0.8" opacity="0.55"/><rect x="11.2" y="17" width="0.9" height="0.9" fill="#fff" opacity="0.6"/></svg>
<svg style="left:3px;top:191px" width="16" height="16" viewBox="0 0 16 16"><rect x="0.3" y="0.3" width="15.4" height="15.4" rx="1" fill="#e8a0a0"/><circle cx="2.00" cy="2.00" r="1.75" fill="#c42a20"/><circle cx="5.90" cy="2.00" r="1.75" fill="#c42a20"/><circle cx="9.80" cy="2.00" r="1.75" fill="#c42a20"/><circle cx="13.70" cy="2.00" r="1.75" fill="#c42a20"/><circle cx="2.00" cy="5.90" r="1.75" fill="#c42a20"/><rect x="4.60" y="4.60" width="2.6" height="2.6" fill="#fff"/><rect x="8.50" y="4.60" width="2.6" height="2.6" fill="#fff"/><rect x="12.40" y="4.60" width="2.6" height="2.6" fill="#fff"/><circle cx="2.00" cy="9.80" r="1.75" fill="#c42a20"/><rect x="4.60" y="8.50" width="2.6" height="2.6" fill="#fff"/><rect x="8.50" y="8.50" width="2.6" height="2.6" fill="#fff"/><rect x="12.40" y="8.50" width="2.6" height="2.6" fill="#fff"/><circle cx="2.00" cy="13.70" r="1.75" fill="#c42a20"/><rect x="4.60" y="12.40" width="2.6" height="2.6" fill="#fff"/><rect x="8.50" y="12.40" width="2.6" height="2.6" fill="#fff"/><rect x="12.40" y="12.40" width="2.6" height="2.6" fill="#fff"/><rect x="3.9" y="3.9" width="11.8" height="11.8" fill="none" stroke="#d05050" stroke-width="0.5"/></svg>
<svg style="left:4px;top:227px" width="14" height="16" viewBox="0 0 14 16"><rect x="1.2" y="0.3" width="11.8" height="15.5" rx="1" fill="#3a8ed8"/><rect x="4.5" y="4.4" width="6.3" height="3.4" fill="none" stroke="#fff" stroke-width="1.1"/><rect x="0" y="1.5" width="2.3" height="0.9" fill="#3a8ed8"/><rect x="0" y="3.8" width="2.3" height="0.9" fill="#3a8ed8"/><rect x="0" y="6.1" width="2.3" height="0.9" fill="#3a8ed8"/><rect x="0" y="8.4" width="2.3" height="0.9" fill="#3a8ed8"/><rect x="0" y="10.7" width="2.3" height="0.9" fill="#3a8ed8"/><rect x="0" y="13.0" width="2.3" height="0.9" fill="#3a8ed8"/></svg>
<svg style="left:2px;top:261px" width="18" height="19" viewBox="0 0 18 19"><path d="M3.5 14A7.5 7.5 0 1 1 14.8 15" fill="none" stroke="#e5493a" stroke-width="0.9"/><path d="M2 12.5L3.6 14.6L5.6 13" fill="none" stroke="#e5493a" stroke-width="0.9"/><path d="M9 2.6C11.4 2.6 12.5 4.5 12.4 7C12.3 9.3 11.4 10.8 10.6 11.6V12.6C12.6 13.3 15.5 14.3 15.7 17.3V18.4H2.3V17.3C2.5 14.3 5.4 13.3 7.4 12.6V11.6C6.6 10.8 5.7 9.3 5.6 7C5.5 4.5 6.6 2.6 9 2.6Z" fill="#e5493a"/></svg>
<svg style="left:0px;top:290px" width="24" height="30" viewBox="0 0 24 30"><rect x="3" y="9" width="15.9" height="15.8" rx="0.8" fill="#26374a"/><rect x="9" y="12.6" width="9" height="1.3" fill="#e8ecf0"/><rect x="14.4" y="8" width="2.2" height="2.8" rx="1" fill="#e8ecf0" stroke="#26374a" stroke-width="0.6"/><rect x="6" y="15.3" width="2.2" height="1.8" fill="#fff"/><rect x="6" y="18.1" width="2.2" height="1.9" fill="#fff"/><rect x="6" y="21.1" width="2.2" height="1.8" fill="#fff"/><rect x="9.1" y="15.3" width="3.7" height="1.8" fill="#fff"/><rect x="9.1" y="18.1" width="3.7" height="1.9" fill="#fff"/><rect x="9.1" y="21.1" width="3.7" height="1.8" fill="#fff"/><rect x="13.8" y="15.3" width="2.2" height="1.8" fill="#fff"/><rect x="13.8" y="18.1" width="2.2" height="1.9" fill="#fff"/><rect x="13.8" y="21.1" width="2.2" height="1.8" fill="#fff"/><circle cx="5.3" cy="11.5" r="3.9" fill="#f4f6f8"/><circle cx="5.3" cy="11.5" r="3.1" fill="none" stroke="#26374a" stroke-width="0.9"/><path d="M5.3 9.6V11.8H4.2" stroke="#26374a" stroke-width="0.7" fill="none"/></svg>
<svg style="left:3px;top:345px" width="16" height="16" viewBox="0 0 16 16"><circle cx="8" cy="8" r="8" fill="#2ecb70"/><path d="M4.3 8.3L6.9 10.9L11.8 5.6" stroke="#fff" stroke-width="1" fill="none"/></svg>
<svg style="left:3px;top:381px" width="16" height="16" viewBox="0 0 16 16"><circle cx="8" cy="8" r="8" fill="#e74c3c"/><path d="M4.5 11.5L6.8 5L9.2 11.5M5.3 9.3H8.5M10 5.8H13M11.5 4.3V7.3" stroke="#fff" stroke-width="0.8" fill="none"/></svg>
<svg style="left:3px;top:416px" width="16" height="17" viewBox="0 0 16 17"><path d="M6 3V1.5H10V3" stroke="#2a7fc0" stroke-width="1" fill="none"/><rect x="0" y="3" width="16" height="14" rx="0.8" fill="#2a7fc0"/><path d="M0 9.5H6M10 9.5H16" stroke="#fff" stroke-width="1"/><rect x="6.3" y="8.3" width="3.4" height="2.4" rx="1" fill="none" stroke="#fff" stroke-width="0.9"/></svg>
<svg style="left:3px;top:452px" width="16" height="18" viewBox="0 0 16 18"><path d="M8 0.3C10.5 1.5 13 2 15.8 2.2V8C15.8 12.5 12 15.8 8 17.8C4 15.8 0.2 12.5 0.2 8V2.2C3 2 5.5 1.5 8 0.3Z" fill="#28ae5f"/><path d="M4.8 8.5L7.2 10.8L11.5 6.4" stroke="#fff" stroke-width="1" fill="none"/></svg>
<svg style="left:4px;top:490px" width="14" height="14" viewBox="0 0 14 14"><rect x="0" y="2" width="3.8" height="12" fill="#19bccf"/><rect x="5.2" y="6" width="3.8" height="8" fill="#19bccf"/><rect x="10.2" y="0" width="3.8" height="14" fill="#19bccf"/></svg>
<svg style="left:0px;top:530px" width="24" height="25" viewBox="0 0 24 25"><path d="M0.5 7.3L10.5 0.8L23 7.3" stroke="#fff" stroke-width="0.9" fill="none"/><path d="M0 7.5C3 6.8 7 6.8 10 7.8V22.3C7 21.3 3 21.3 0 22Z" fill="#fff"/><path d="M11.3 7.8C14 6.8 19 6.8 23 7.5V22C19 21.3 14 21.3 11.3 22.3Z" fill="#fff"/><path d="M0 23.3C4 22.3 8 22.6 10.6 24.3C13 22.6 18 22.3 23 23.3" stroke="#fff" stroke-width="1.2" fill="none"/></svg>
<svg style="left:3px;top:570px" width="17" height="18" viewBox="0 0 17 18"><rect x="0" y="0.8" width="1.8" height="16.2" rx="0.9" fill="#1fa6b4"/><path d="M4 1.3C4 0.8 4.4 0.5 5 0.5H12L16 4.5V16.3C16 16.9 15.6 17.3 15 17.3H5C4.4 17.3 4 16.9 4 16.3Z" fill="#1fa6b4"/><path d="M11.5 0.5V5H16" fill="#fff" opacity="0.9"/><path d="M7 10.2H13M7 12.8H11" stroke="#fff" stroke-width="1.2"/></svg>
<svg style="left:2px;top:606px" width="18" height="18" viewBox="0 0 18 18"><ellipse cx="12.3" cy="12.4" rx="5.5" ry="4.4" fill="#c0392b"/><path d="M14.5 15.5L17.5 17.3L16.5 14Z" fill="#c0392b"/><ellipse cx="7" cy="6.4" rx="6.3" ry="5.6" fill="#c0392b" stroke="#f4f6f8" stroke-width="0.9"/><path d="M2.5 9.5L0.8 12L4.8 11Z" fill="#c0392b"/><path d="M4 4H10M4 6.4H10M4 8.7H9" stroke="#fff" stroke-width="1"/><path d="M12 13.5H16" stroke="#fff" stroke-width="0.7" opacity="0.8"/></svg>
<svg style="left:0px;top:638px" width="24" height="24" viewBox="0 0 24 24"><path d="M2.3 21.4L4.6 11.8L13.8 3.6C14.3 3.2 15 3.4 15.3 3.9L6.8 12.6L7.2 16.6L11.3 17.1L19.6 8.6C20 9 20 9.8 19.6 10.2L12.6 17.8Z" fill="#3a98dd"/><path d="M9.4 14.2L17.6 5.8" stroke="#3a98dd" stroke-width="1.9" stroke-linecap="round"/></svg>
<svg style="left:3px;top:678px" width="17" height="17" viewBox="0 0 17 17"><path d="M16.43,6.55 L16.43,9.85 L14.22,10.03 L13.78,11.09 L15.22,12.79 L12.89,15.12 L11.19,13.68 L10.13,14.12 L9.95,16.33 L6.65,16.33 L6.47,14.12 L5.41,13.68 L3.71,15.12 L1.38,12.79 L2.82,11.09 L2.38,10.03 L0.17,9.85 L0.17,6.55 L2.38,6.37 L2.82,5.31 L1.38,3.61 L3.71,1.28 L5.41,2.72 L6.47,2.28 L6.65,0.07 L9.95,0.07 L10.13,2.28 L11.19,2.72 L12.89,1.28 L15.22,3.61 L13.78,5.31 L14.22,6.37Z" fill="#96a4a6"/><circle cx="8.3" cy="8.2" r="2.6" fill="#f4f6f8"/></svg>
<svg style="left:175px;top:42px" width="40" height="40" viewBox="0 0 40 40">
<path d="M11.5 12C11.5 7.5 14 5.8 18.5 5.8C23 5.8 25.5 7.5 25.5 12" fill="#fff" stroke="#9a9a9a" stroke-width="1.3"/>
<path d="M8.3 15.5C8.5 12.5 10.5 10.8 13.5 10.8L15 14Z" fill="#4a4a4a" stroke="#888" stroke-width="0.6"/>
<path d="M27.5 15.5C27.3 12.5 25.3 10.8 22.3 10.8L21 14Z" fill="#4a4a4a" stroke="#888" stroke-width="0.6"/>
<path d="M12.5 29L10.8 33" stroke="#333" stroke-width="2.2"/><path d="M23 29L25 33" stroke="#333" stroke-width="2.2"/>
<circle cx="17.8" cy="23.2" r="8.7" fill="#e8e8e8" stroke="#8a8a8a" stroke-width="1.2"/>
<circle cx="17.8" cy="23.2" r="7.2" fill="#fbfbfb"/>
<path d="M11.3 22.8H17.6" stroke="#e0a0a0" stroke-width="1.8"/><path d="M11.3 21.6H17.3M11.3 24H17.3" stroke="#c8e4ec" stroke-width="0.5"/>
<path d="M17.6 22.8L21.8 19.3M17.6 22.8L21.8 25.3" stroke="#1a1a1a" stroke-width="1.1"/>
<path d="M17.8 16.3V17.6M17.8 28.6V29.9M24.3 23.2H23" stroke="#b08080" stroke-width="0.8"/>
<path d="M20 34.5L28.5 20L31 21.4L22.5 35.8L19.8 36.5Z" fill="#f3d52e" stroke="#a08a20" stroke-width="0.6"/>
<circle cx="29.8" cy="19.8" r="1.5" fill="#e06060"/>
<path d="M21.5 35.3H30.6" stroke="#aaa" stroke-width="0.9"/>
</svg>
<svg style="left:256px;top:42px" width="40" height="40" viewBox="0 0 40 40">
<path d="M16.5 32.8C16.5 25 19.5 22.5 23.5 21.2H28C32.5 22.5 34.8 25 34.8 32.8Z" fill="#7d7d7d"/>
<path d="M20.5 20.5L23.5 29L26.2 20.3Z" fill="#f4f4f4"/>
<path d="M18 22.5L20.2 31.5L22.5 27L20.5 21.2Z" fill="#d8102a"/>
<path d="M24.5 20.8L28.5 22L23.5 30.5L22.5 27Z" fill="#e01030"/>
<path d="M22.8 22L21.8 27L23 29.5L24 27Z" fill="#a8101e"/>
<circle cx="26.5" cy="29" r="0.9" fill="#e86a8a"/>
<path d="M17.2 12.5C17.2 17.5 19 21 22 21C24.8 21 26.5 17.5 26.5 13Z" fill="#f7cfb0"/>
<path d="M26.5 13V17C26.5 20 25 21.2 22 21.2V20.5L25.5 17Z" fill="#e8b090" opacity="0.6"/>
<path d="M16.5 12.5C16 8.5 18.5 6.8 22 6.8C26 6.8 28.5 8.8 28.3 13C28 16 27.3 18 26.8 18.5L26.4 12.6C24.5 11.5 20.5 11 17.2 13.2Z" fill="#1c1c1c"/>
<circle cx="12.2" cy="28" r="6.3" fill="#2fae2a" stroke="#c8d0c0" stroke-width="0.8"/>
<path d="M8.8 27.3L11.5 31L15.8 25" stroke="#e8eef0" stroke-width="1.8" fill="none"/>
</svg>
<svg style="left:336px;top:42px" width="40" height="40" viewBox="0 0 40 40">
<path d="M6.8 29C7.5 24.5 11 22 15 22H18C21 22 22 23 22 29Z" fill="#f0a0a8" stroke="#e06070" stroke-width="0.8"/>
<path d="M10.5 21C10 14 11 6 17 5.8C22 5.8 23 10 22 20L19.5 21.5C15 22 12 22 10.5 21Z" fill="#c8773a"/>
<ellipse cx="17.5" cy="15.5" rx="3.8" ry="4.8" fill="#f6d08a"/>
<path d="M13 36.3C13.5 30 17 27.5 22.5 27.2H28C33.5 27.5 37 30 37.4 36.3Z" fill="#b8e0b4" stroke="#3c9a3c" stroke-width="0.9"/>
<path d="M22.5 24V27.5C23.5 29 27 29 28 27.5V24Z" fill="#f6d8a0" stroke="#d0b070" stroke-width="0.5"/>
<path d="M19 13C18.5 8.5 21.5 7.6 25.5 7.6C29.5 7.6 32.5 9 32 15.5L31 19C31 22 29 26.3 25.5 26.3C22 26.3 20 22 20 19Z" fill="#fadf9e" stroke="#d8b870" stroke-width="0.6"/>
<path d="M19 13C18.5 8.5 21.5 7.6 25.5 7.6C29.5 7.6 32.5 9 32 15.5C30 12 27 13 25 13.5C23 14 21 14.5 20.3 16Z" fill="#f3cf80"/>
</svg>
<svg style="left:396px;top:42px" width="40" height="40" viewBox="0 0 40 40">
<path d="M6.5 35.5L9 27.5L14 32.5Z" fill="#ee7777"/>
<path d="M10 28.5L12 31" stroke="#f8e070" stroke-width="1.5"/>
<path d="M6.5 20.5L11 16.5H15.5L11 22Z" fill="#88b4ee" stroke="#5e8ed6" stroke-width="0.7"/>
<path d="M19.5 35.5L23.5 31V26.5L18 31Z" fill="#88b4ee" stroke="#5e8ed6" stroke-width="0.7"/>
<path d="M8.5 26.5L11 29L13 31L15.8 33.5L17.5 31.8L9.8 24Z" fill="#88b4ee" stroke="#5e8ed6" stroke-width="0.7"/>
<path d="M9.8 24L24.5 9.2C26 7.5 28.5 6.2 33.8 6.2C34 11 33 14 31 16L17.5 31.5Z" fill="#c8e4fc" stroke="#6a98d8" stroke-width="0.8"/>
<circle cx="26.6" cy="14.2" r="2.6" fill="#88b4ee" stroke="#5e8ed6" stroke-width="0.6"/>
<circle cx="21" cy="19.8" r="2.6" fill="#88b4ee" stroke="#5e8ed6" stroke-width="0.6"/>
</svg>
<svg style="left:454px;top:42px" width="40" height="40" viewBox="0 0 40 40">
<path d="M11 18.5V25.5C11 28 28.8 28 28.8 25.5V18.5Z" fill="#262626"/>
<ellipse cx="19.9" cy="25.8" rx="8.8" ry="1.7" fill="#000"/>
<path d="M4.5 17.8L19.8 10.5L35.4 17.8L19.8 22.7Z" fill="#2a2a2a" stroke="#111" stroke-width="0.4"/>
<path d="M7.4 16.3V29" stroke="#c88a5a" stroke-width="0.9"/>
<path d="M7.4 27.8L9 30.5L7.4 34L5.8 30.5Z" fill="#e8a070"/>
</svg>
<svg style="left:530px;top:42px" width="40" height="40" viewBox="0 0 40 40">
<path d="M4 5.5V34.6H38.5" stroke="#b8cee0" stroke-width="3.4" fill="none" stroke-linecap="round" stroke-linejoin="round"/>
<path d="M5.8 22L13.6 19.8L24.9 26.6L35.1 12.2" stroke="#b8cee0" stroke-width="2.8" fill="none" stroke-linejoin="round"/>
<circle cx="13.6" cy="19.8" r="3.6" fill="#b8cee0"/><circle cx="24.9" cy="26.6" r="3.8" fill="#b8cee0"/><circle cx="35.1" cy="12.2" r="3.9" fill="#b8cee0"/>
</svg>
<svg style="left:599px;top:42px" width="40" height="40" viewBox="0 0 40 40">
<rect x="10.8" y="6.2" width="18.4" height="8" fill="#fff" stroke="#6e8098" stroke-width="0.9"/>
<rect x="5.4" y="13.5" width="29.2" height="16.5" rx="1.6" fill="#b4c2d4" stroke="#6e8098" stroke-width="0.9"/>
<rect x="10.8" y="13.6" width="18.2" height="8" rx="1" fill="#8ab6ee" stroke="#4a7cc6" stroke-width="0.9"/>
<rect x="8.5" y="25.2" width="23" height="2.6" rx="1.3" fill="#6e8098"/>
<rect x="10.8" y="26" width="18.4" height="9.6" fill="#fff" stroke="#6e8098" stroke-width="0.9"/>
<path d="M15 29H25M15 32.3H25" stroke="#95a5b5" stroke-width="0.9"/>
<circle cx="31.7" cy="17.6" r="0.9" fill="#f8d84a"/>
</svg>
<svg style="left:669px;top:42px" width="40" height="40" viewBox="0 0 40 40"><path d="M12.67,16.72 L16.73,16.72 L17.50,19.17 L19.04,20.06 L21.55,19.50 L23.57,23.02 L21.85,24.91 L21.85,26.69 L23.57,28.58 L21.55,32.10 L19.04,31.54 L17.50,32.43 L16.73,34.88 L12.67,34.88 L11.90,32.43 L10.36,31.54 L7.85,32.10 L5.83,28.58 L7.55,26.69 L7.55,24.91 L5.83,23.02 L7.85,19.50 L10.36,20.06 L11.90,19.17Z" fill="#ddd6f4" stroke="#a08acc" stroke-width="0.8" stroke-linejoin="round"/><circle cx="14.7" cy="25.8" r="3.8" fill="#fff" stroke="#a08acc" stroke-width="0.8"/><path d="M25.59,6.68 L28.81,6.68 L29.46,8.56 L30.70,9.27 L32.65,8.89 L34.26,11.69 L32.96,13.18 L32.96,14.62 L34.26,16.11 L32.65,18.91 L30.70,18.53 L29.46,19.24 L28.81,21.12 L25.59,21.12 L24.94,19.24 L23.70,18.53 L21.75,18.91 L20.14,16.11 L21.44,14.62 L21.44,13.18 L20.14,11.69 L21.75,8.89 L23.70,9.27 L24.94,8.56Z" fill="#c8e9fb" stroke="#70b0d8" stroke-width="0.8" stroke-linejoin="round"/><circle cx="27.2" cy="13.9" r="3.4" fill="#fff" stroke="#70b0d8" stroke-width="0.8"/></svg>
<svg style="left:739px;top:42px" width="40" height="40" viewBox="0 0 40 40"><path d="M12.67,16.72 L16.73,16.72 L17.50,19.17 L19.04,20.06 L21.55,19.50 L23.57,23.02 L21.85,24.91 L21.85,26.69 L23.57,28.58 L21.55,32.10 L19.04,31.54 L17.50,32.43 L16.73,34.88 L12.67,34.88 L11.90,32.43 L10.36,31.54 L7.85,32.10 L5.83,28.58 L7.55,26.69 L7.55,24.91 L5.83,23.02 L7.85,19.50 L10.36,20.06 L11.90,19.17Z" fill="#ddd6f4" stroke="#a08acc" stroke-width="0.8" stroke-linejoin="round"/><circle cx="14.7" cy="25.8" r="3.8" fill="#fff" stroke="#a08acc" stroke-width="0.8"/><path d="M25.59,6.68 L28.81,6.68 L29.46,8.56 L30.70,9.27 L32.65,8.89 L34.26,11.69 L32.96,13.18 L32.96,14.62 L34.26,16.11 L32.65,18.91 L30.70,18.53 L29.46,19.24 L28.81,21.12 L25.59,21.12 L24.94,19.24 L23.70,18.53 L21.75,18.91 L20.14,16.11 L21.44,14.62 L21.44,13.18 L20.14,11.69 L21.75,8.89 L23.70,9.27 L24.94,8.56Z" fill="#c8e9fb" stroke="#70b0d8" stroke-width="0.8" stroke-linejoin="round"/><circle cx="27.2" cy="13.9" r="3.4" fill="#fff" stroke="#70b0d8" stroke-width="0.8"/></svg>
<svg style="left:801px;top:42px" width="40" height="40" viewBox="0 0 40 40">
<circle cx="21" cy="21" r="14.6" fill="#8ab6ee" stroke="#4f80c8" stroke-width="1"/>
<path d="M17.5 17C17.5 14.3 19 13 21 13C23 13 24.5 14.3 24.5 16.5C24.5 19.5 21 20 21 24" stroke="#fff" stroke-width="2" fill="none"/>
<circle cx="21" cy="28" r="1.3" fill="#fff"/>
</svg>
<svg style="left:879px;top:42px" width="40" height="40" viewBox="0 0 40 40">
<path d="M6.5 11.9L11.9 6.2L35.7 29.7L30 35.4Z" fill="#8ab6ee" stroke="#4f80c8" stroke-width="0.9"/>
<path d="M12 10L13.5 11.5M15 13L17.5 15.5M18 16L19.5 17.5M24 22L25.5 23.5M27 25L29.5 27.5M30 28L31.5 29.5" stroke="#4f80c8" stroke-width="0.8"/>
<path d="M10.5 27.5L29.5 9L33 12.5L14 31Z" fill="#fce590" stroke="#b8983a" stroke-width="0.8"/>
<path d="M10.5 27.5L14 31L7.3 34.7Z" fill="#f8c878" stroke="#b8983a" stroke-width="0.6"/>
<path d="M8.5 32L9.8 33.3L7.3 34.7Z" fill="#223"/>
<path d="M27.8 10.7L30.8 7.7L34.3 11.2L31.3 14.2Z" fill="#d8e8f4" stroke="#8898a8" stroke-width="0.6"/>
<path d="M30.8 7.7C32.5 6 34 6.2 35 7.2C36 8.2 36 9.6 34.3 11.2Z" fill="#f07878"/>
</svg>
<svg style="left:982px;top:42px" width="40" height="40" viewBox="0 0 40 40">
<rect x="6.6" y="7.4" width="27" height="27" rx="0.8" fill="#fff" stroke="#8ea0b2" stroke-width="1.1"/>
<rect x="6.6" y="31.8" width="27" height="2.6" fill="#e2edf5"/>
<rect x="6.6" y="7.4" width="27" height="6" fill="#f59292" stroke="#d25c5c" stroke-width="1"/>
<rect x="14.5" y="16.7" width="2.2" height="2.2" fill="#b8c8d6"/><rect x="18.7" y="16.7" width="2.2" height="2.2" fill="#b8c8d6"/><rect x="23.0" y="16.7" width="2.2" height="2.2" fill="#b8c8d6"/><rect x="27.2" y="16.7" width="2.2" height="2.2" fill="#b8c8d6"/><rect x="10.2" y="21.0" width="2.2" height="2.2" fill="#b8c8d6"/><rect x="14.5" y="21.0" width="2.2" height="2.2" fill="#b8c8d6"/><rect x="18.7" y="21.0" width="2.2" height="2.2" fill="#b8c8d6"/><rect x="23.0" y="21.0" width="2.2" height="2.2" fill="#b8c8d6"/><rect x="27.2" y="21.0" width="2.2" height="2.2" fill="#b8c8d6"/><rect x="10.2" y="25.2" width="2.2" height="2.2" fill="#b8c8d6"/><rect x="14.5" y="25.2" width="2.2" height="2.2" fill="#b8c8d6"/><rect x="18.7" y="25.2" width="2.2" height="2.2" fill="#b8c8d6"/><rect x="23.0" y="25.2" width="2.2" height="2.2" fill="#b8c8d6"/></svg>
<svg style="left:1082px;top:42px" width="40" height="40" viewBox="0 0 40 40">
<circle cx="19.9" cy="20.7" r="15.6" fill="#4cc552" stroke="#16a01e" stroke-width="1"/>
<rect x="19" y="13" width="2.2" height="16" fill="#fff"/><rect x="11.9" y="19.7" width="16.1" height="2.3" fill="#fff"/>
</svg>
<svg style="left:1194px;top:42px" width="40" height="40" viewBox="0 0 40 40">
<path d="M9 13.5L31 10L33 27.5L12 31Z" fill="#f6f6f6" stroke="#333" stroke-width="0.9"/>
<path d="M9 13.5L31 10L31.5 14L9.6 17.5Z" fill="#2a6ad0"/>
<path d="M13 11V15M23.5 9V13" stroke="#888" stroke-width="1"/>
<rect x="17.0" y="19.0" width="1.2" height="1.2" fill="#333"/><rect x="20.0" y="18.5" width="1.2" height="1.2" fill="#333"/><rect x="23.0" y="18.0" width="1.2" height="1.2" fill="#333"/><rect x="26.0" y="17.5" width="1.2" height="1.2" fill="#333"/><rect x="14.0" y="23.0" width="1.2" height="1.2" fill="#333"/><rect x="17.0" y="22.5" width="1.2" height="1.2" fill="#333"/><rect x="20.0" y="22.0" width="1.2" height="1.2" fill="#333"/><rect x="23.0" y="21.5" width="1.2" height="1.2" fill="#333"/><rect x="26.0" y="21.0" width="1.2" height="1.2" fill="#333"/><rect x="17.0" y="26.0" width="1.2" height="1.2" fill="#333"/><rect x="20.0" y="25.5" width="1.2" height="1.2" fill="#333"/><rect x="23.0" y="25.0" width="1.2" height="1.2" fill="#333"/>
<circle cx="24.5" cy="21.5" r="1.5" fill="#6a9ae0"/>
<path d="M12 30L33 27.5V30L12 32.5Z" fill="#ccc" stroke="#555" stroke-width="0.5"/>
<circle cx="11" cy="27" r="4.8" fill="#eef" fill-opacity="0.5" stroke="#999" stroke-width="1"/>
<path d="M14 31L18 35" stroke="#444" stroke-width="1.8"/>
</svg>
</body></html>
